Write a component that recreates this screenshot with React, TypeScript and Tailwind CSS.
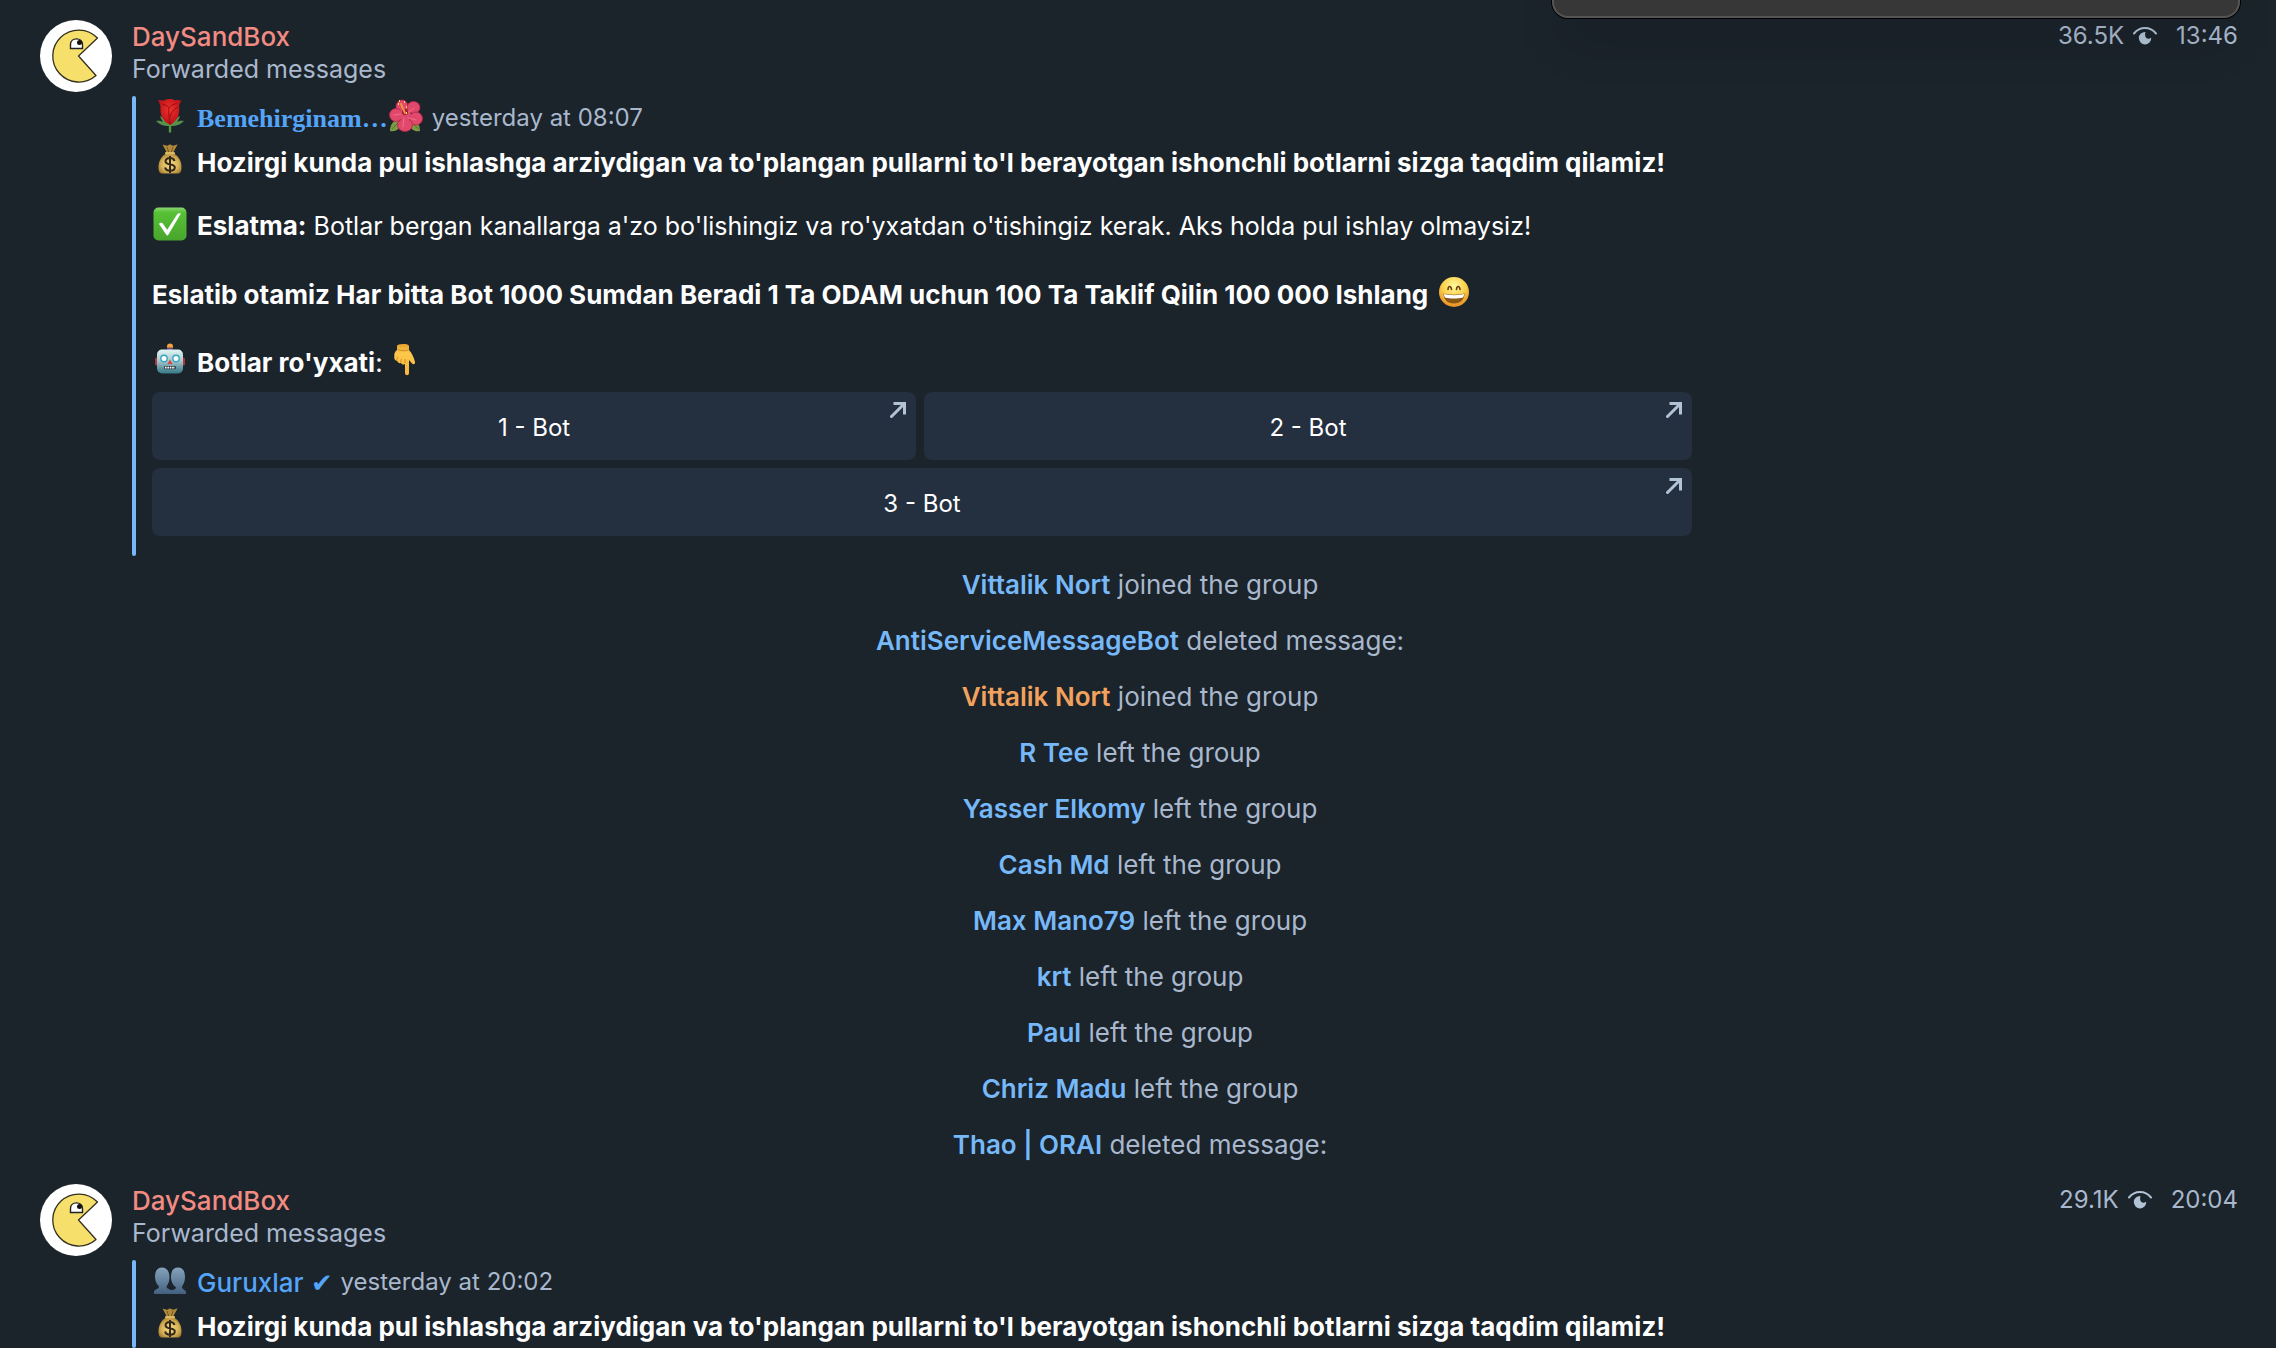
import React from "react";

const services = [
  { name: "Vittalik Nort", action: "joined the group" },
  { name: "AntiServiceMessageBot", action: "deleted message:" },
  { name: "Vittalik Nort", action: "joined the group", highlight: true },
  { name: "R Tee", action: "left the group" },
  { name: "Yasser Elkomy", action: "left the group" },
  { name: "Cash Md", action: "left the group" },
  { name: "Max Mano79", action: "left the group" },
  { name: "krt", action: "left the group" },
  { name: "Paul", action: "left the group" },
  { name: "Chriz Madu", action: "left the group" },
  { name: "Thao | ORAI", action: "deleted message:" },
];

const emojiClass = "mx-px mb-1 size-[34px] shrink-0";

function Rose() {
  return (
    <svg viewBox="0 0 34 34" className={emojiClass} role="img" aria-label="Rose">
      <defs>
        <radialGradient id="rose" cx="50%" cy="40%" r="60%">
          <stop offset="0" stopColor="#f0302c" />
          <stop offset="1" stopColor="#b80f16" />
        </radialGradient>
      </defs>
      <path d="M17 24v8.500" stroke="#4f9a3a" strokeWidth="2.400" strokeLinecap="round" />
      <path d="M16 27C10 27 6 25 3 22c3-.6 5 0 7 1-1-2-2-3-3-6 3 1 5 4 9 8zM18 27c6 0 10-2 13-5-3-.6-5 0-7 1 1-2 2-3 3-6-3 1-5 4-9 8z" fill="#57914a" />
      <path d="M5 1.500c2-.8 4-.3 5.500.3C13-.3 19-.5 22 1.500c2-.6 4.500-.6 6.500.5-1.500 1.500-2 3-2.500 5 1 8-1 14-8.500 19C9 22 7 15 7.500 8c0-2-1-4-2.500-6.500z" fill="url(#rose)" />
      <path d="M9 5c3 1 6 2 7 4 2-3 5-4 8-4.500M16 9c-1 3 0 8 1 16M25 8c-4 2-7 5-8 10" fill="none" stroke="#8c0b12" strokeWidth=".8" />
    </svg>
  );
}

function Hibiscus() {
  return (
    <svg viewBox="0 0 34 34" className={emojiClass} role="img" aria-label="Hibiscus">
      <path d="M9 20c-5 2-8 6-8 12 6 1 10-2 11-8zM25 22c4 1 6 5 6 10-5 1-9-1-10-6z" fill="#7c9a45" />
      <path d="M3 30l7-7M30 30l-6-5" stroke="#53732c" strokeWidth="1" />
      <g fill="#e0496b" stroke="#b82549" strokeWidth=".8">
        <ellipse cx="13" cy="7.500" rx="6" ry="6.500" />
        <ellipse cx="24.500" cy="8.500" rx="6.500" ry="6" />
        <ellipse cx="27" cy="19.500" rx="6.500" ry="6.500" />
        <ellipse cx="16" cy="26" rx="7.500" ry="6.500" />
        <ellipse cx="7" cy="16" rx="6.500" ry="6.500" />
        <circle cx="16" cy="16" r="6" stroke="none" />
      </g>
      <path d="M17 15l8-6M19 19l8 2M15 19l-1 9M12 15l-7 1" stroke="#f06f8a" strokeWidth="1" strokeLinecap="round" />
      <circle cx="16" cy="13" r="3" fill="#a3172f" />
      <path d="M12 5l4 9" stroke="#e8953f" strokeWidth="2" strokeLinecap="round" />
      <path d="M9 5h1M10 2h1M15 3h1M17 8h1M17 14h1" stroke="#ffd75e" strokeWidth="2" />
    </svg>
  );
}

function MoneyBag() {
  return (
    <svg viewBox="0 0 34 34" className={emojiClass} role="img" aria-label="Money bag">
      <defs>
        <radialGradient id="bag" cx="50%" cy="55%" r="60%">
          <stop offset="0" stopColor="#f5dc84" />
          <stop offset=".6" stopColor="#d9b458" />
          <stop offset="1" stopColor="#9c762c" />
        </radialGradient>
      </defs>
      <path d="M9.500 1.500c3 .8 4 1.500 5.500 1 1-1.500 3-1.500 4 0 2 .5 3-.5 5.500-1-1.500 3-3.500 6-4.500 9h-6c-1-3-3-6-4.500-9z" fill="#b08a3a" />
      <path d="M14 4l2 6M20 4l-2 6" stroke="#7a5a1e" strokeWidth="1" />
      <path d="M13 10.500h8c5 3 7.500 8 7.500 14 0 4.500-1.500 6-4 6h-15c-2.500 0-4-1.500-4-6 0-6 2.500-11 7.500-14z" fill="url(#bag)" />
      <rect x="12" y="9" width="10" height="2.500" rx="1.200" fill="#dcb960" />
      <path d="M21.500 18c-.5-2-2.300-3-4.500-3-2.700 0-4.500 1.300-4.500 3.300 0 4.700 9.300 1.900 9.300 6.200 0 2-1.900 3.200-4.800 3.200-2.600 0-4.500-1.200-4.900-3.200M17 13v17" fill="none" stroke="#33291a" strokeWidth="2" />
    </svg>
  );
}

function CheckBox() {
  return (
    <svg viewBox="0 0 34 34" className={emojiClass} role="img" aria-label="Check mark">
      <defs>
        <linearGradient id="green" x2="0" y2="1">
          <stop offset="0" stopColor="#8ad873" />
          <stop offset=".15" stopColor="#57c136" />
          <stop offset="1" stopColor="#48a52d" />
        </linearGradient>
      </defs>
      <rect x=".5" y=".5" width="33" height="33" rx="5" fill="url(#green)" />
      <path d="M6 17c.8-1.500 3-1.700 4-.3l4.200 6L24 7.500c.8-1.500 2.500-1.500 4-1.200L15.500 27.500c-.7 1.300-1.600 1.300-2.400 0z" fill="#fff" />
    </svg>
  );
}

function Robot() {
  return (
    <svg viewBox="0 0 34 34" className={emojiClass} role="img" aria-label="Robot">
      <defs>
        <linearGradient id="robot" x2="0" y2="1">
          <stop offset="0" stopColor="#e2f6f5" />
          <stop offset=".5" stopColor="#a3c4c9" />
          <stop offset=".8" stopColor="#5b929d" />
          <stop offset="1" stopColor="#397b88" />
        </linearGradient>
      </defs>
      <circle cx="17" cy="3.500" r="3" fill="#f5a13c" />
      <path d="M14.500 4.500h5v4h-5z" fill="#6a4a78" />
      <rect x="2" y="14.500" width="4" height="8" rx="1.500" fill="#a8393f" />
      <rect x="28" y="14.500" width="4" height="8" rx="1.500" fill="#a8393f" />
      <rect x="4" y="6.500" width="26" height="24" rx="5" fill="url(#robot)" />
      <circle cx="11" cy="15.500" r="3.200" fill="#fff" stroke="#35a7c4" strokeWidth="1.400" />
      <circle cx="23" cy="15.500" r="3.200" fill="#fff" stroke="#35a7c4" strokeWidth="1.400" />
      <path d="M17 16.500l2.500 4.500h-5z" fill="#df423d" />
      <rect x="11" y="23" width="12" height="3.200" rx="1" fill="#33434c" />
      <path d="M12 24.600h10" stroke="#fff" strokeWidth="1.600" strokeDasharray="1.600 .8" />
    </svg>
  );
}

function PointDown() {
  return (
    <svg viewBox="0 0 34 34" className={emojiClass} role="img" aria-label="Pointing down">
      <defs>
        <linearGradient id="hand" x2="0" y2="1">
          <stop offset="0" stopColor="#e9a02b" />
          <stop offset=".3" stopColor="#fcc84b" />
          <stop offset="1" stopColor="#f7b53a" />
        </linearGradient>
      </defs>
      <path d="M9 3c0-2.500 12-3 12 0v4c3 3 5 8 6 12 .5 2-1.500 3-3 1.500L21 17v13c0 3-4 3-4 0v-9c-1.500 1-3.500.5-4-1-2 .5-3.500-.5-3.700-2C7 17.500 6 16 6.300 14c-.3-4 1-6 2.700-7z" fill="url(#hand)" />
      <path d="M13 19.500c-.5-2 0-3 1-3.500M9 17.500c-.3-2 .3-3 1.300-3.500M17 20v-4M9.500 6.500c3 1.500 8 1.500 11 .5" stroke="#d38c22" strokeWidth="1" fill="none" />
    </svg>
  );
}

function Grin() {
  return (
    <svg viewBox="0 0 34 34" className={emojiClass} role="img" aria-label="Grinning face">
      <defs>
        <radialGradient id="face" cx="50%" cy="30%" r="70%">
          <stop offset="0" stopColor="#fffaa0" />
          <stop offset=".55" stopColor="#fbd04a" />
          <stop offset="1" stopColor="#e88b23" />
        </radialGradient>
      </defs>
      <circle cx="17" cy="17" r="15" fill="url(#face)" />
      <path d="M11 14.500c.3-4 3-4 3.500 0M19.500 14.500c.3-4 3-4 3.500 0" fill="none" stroke="#69400f" strokeWidth="1.600" strokeLinecap="round" />
      <path d="M6.500 18.500c6 1.500 15 1.500 21 0 0 6-4 10-10.500 10s-10.500-4-10.500-10z" fill="#8a5712" />
      <path d="M7 19c6 1.500 14 1.500 20 0 0 2-.5 2.600-1 3.400-5 1.300-13 1.300-18 0-.5-.8-1-1.400-1-3.400z" fill="#fff" />
    </svg>
  );
}

function People() {
  return (
    <svg viewBox="0 0 34 34" className={emojiClass} role="img" aria-label="People">
      <defs>
        <linearGradient id="people" x2="0" y2="1">
          <stop offset="0" stopColor="#86a3bd" />
          <stop offset="1" stopColor="#43607f" />
        </linearGradient>
      </defs>
      <path d="M17 31v-2c0-2 6-2 6-4.500-2-1.500-5-5-5-10C18 8 20 4.500 25 4.500s7 3.500 7 10c0 4-1.500 7-3 9 0 3.500 4 3 4 6V31z" fill="url(#people)" />
      <path d="M1 31v-2c0-3 5-2.500 5-5.500-2-2-4-5-4-9.500C2 8 4.500 4.500 9 4.500s7.500 3.500 7.500 10c0 4-1.500 7-3 9 0 3.500 7 2.500 8 7.500z" fill="url(#people)" />
    </svg>
  );
}

function Avatar() {
  return (
    <svg viewBox="0 0 72 72" className="size-[72px] shrink-0" role="img" aria-label="DaySandBox avatar">
      <circle cx="36" cy="36" r="36" fill="#fff" />
      <path d="M38.500 36L57.500 18A26 26 0 1 0 56 55.500Z" fill="#f7df6b" stroke="#33301f" strokeWidth="1.300" strokeLinejoin="round" />
      <path d="M30.500 28.500v-4c0-7.500 12-7.500 12 0v4z" fill="#fff" stroke="#222" strokeWidth="1.400" />
      <circle cx="39.500" cy="22.500" r="2.500" fill="#111" />
    </svg>
  );
}

function Eye() {
  return (
    <svg viewBox="0 0 26 20" className="h-5 w-[26px]" fill="none" aria-hidden="true">
      <path d="M2 7.500C8 .2 18 .2 24 7.500" stroke="#b1c3d5" strokeWidth="2" strokeLinecap="round" />
      <path d="M13.500 6A6.200 6.200 0 1 0 19.200 11.500c-1.500 1.500-3.600 1.600-4.800.5-1.300-1.200-1.700-3.500-.9-6z" fill="#b1c3d5" />
    </svg>
  );
}

function BotButton({ label, className = "" }: { label: string; className?: string }) {
  return (
    <button type="button" className={`relative h-[68px] rounded-[8px] bg-[#242f3f] pt-1 text-center text-2xl text-white ${className}`}>
      {label}
      <svg viewBox="0 0 16 16" className="absolute top-[10px] right-[10px] size-4" fill="none" aria-hidden="true">
        <path d="M1.500 14.500L13 3" stroke="#b1c3d5" strokeWidth="3" strokeLinecap="round" />
        <path d="M3.500 0H16V12.500H13V5L11 3H3.500z" fill="#b1c3d5" />
      </svg>
    </button>
  );
}

type MessageProps = { views: string; time: string; children: React.ReactNode };

function Message({ views, time, children }: MessageProps) {
  return (
    <article className="flex items-start gap-5 pr-[38px] pl-10">
      <Avatar />
      <div className="min-w-0 flex-1">
        <header className="flex items-start justify-between">
          <div className="leading-8">
            <h2 className="pt-px text-[26px] font-medium text-[#f28b82]">DaySandBox</h2>
            <p className="text-[#a9b8cc]">Forwarded messages</p>
          </div>
          <div className="flex items-center gap-2 text-2xl leading-8 text-[#a9b8cc]">
            <span>{views}</span>
            <Eye />
            <time className="ml-[10px]">{time}</time>
          </div>
        </header>
        <div className="mt-[11px] flex">
          <div className="w-1 shrink-0 rounded-full bg-[#76b8f8]" />
          <div className="ml-4 w-[1540px] max-w-full">{children}</div>
        </div>
      </div>
    </article>
  );
}

function Intro() {
  return (
    <p className="flex h-[44px] items-center gap-[9px] text-[26px] font-bold whitespace-nowrap text-white">
      <MoneyBag />
      Hozirgi kunda pul ishlashga arziydigan va to'plangan pullarni to'l berayotgan ishonchli botlarni sizga taqdim qilamiz!
    </p>
  );
}

export default function App() {
  return (
    <main className="relative h-screen overflow-hidden bg-[#1b232b] pt-5 font-['Inter',sans-serif] text-[25px]">
      <div className="absolute top-[-24px] right-[36px] h-[42px] w-[688px] rounded-2xl border-2 border-[#555] bg-[#373738] shadow-2xl ring-1 ring-black" />
      <Message views="36.5K" time="13:46">
        <div className="flex h-[44px] items-center text-[#a9b8cc]">
          <Rose />
          <a href="#bemehirginam" className="ml-[9px] font-['Liberation_Serif',serif] text-[26px] font-bold text-[#54a4f8]">Bemehirginam…</a>
          <Hibiscus />
          <time className="ml-2 text-2xl">yesterday at 08:07</time>
        </div>
        <Intro />
        <p className="mt-5 flex h-[44px] items-center gap-[9px] text-white">
          <CheckBox />
          <span><b className="text-[26px]">Eslatma:</b> Botlar bergan kanallarga a'zo bo'lishingiz va ro'yxatdan o'tishingiz kerak. Aks holda pul ishlay olmaysiz!</span>
        </p>
        <p className="mt-6 flex h-[44px] items-center gap-2 text-[26px] font-bold text-white">
          Eslatib otamiz Har bitta Bot 1000 Sumdan Beradi 1 Ta ODAM uchun 100 Ta Taklif Qilin 100 000 Ishlang
          <Grin />
        </p>
        <p className="mt-6 flex h-[44px] items-center text-[26px] text-white">
          <Robot />
          <span className="mr-1 ml-[9px]"><b>Botlar ro'yxati</b>:</span>
          <PointDown />
        </p>
        <div className="mt-2 mb-5 grid grid-cols-[191fr_192fr] gap-2">
          <BotButton label="1 - Bot" />
          <BotButton label="2 - Bot" />
          <BotButton label="3 - Bot" className="col-span-2" />
        </div>
      </Message>
      <ul className="mt-px mb-[11px] pl-1 text-center text-[26px] text-[#a9b8cc]">
        {services.map((s, i) => (
          <li key={i} className="h-14 leading-[56px]">
            <a href="#member" className={s.highlight ? "font-semibold text-[#f2a25c]" : "font-semibold text-[#76b8f8]"}>{s.name}</a> {s.action}
          </li>
        ))}
      </ul>
      <Message views="29.1K" time="20:04">
        <div className="flex h-[44px] items-center text-[#a9b8cc]">
          <People />
          <a href="#guruxlar" className="ml-[9px] text-[26px] font-medium text-[#54a4f8]">Guruxlar ✔</a>
          <time className="ml-2 text-2xl">yesterday at 20:02</time>
        </div>
        <Intro />
      </Message>
    </main>
  );
}
